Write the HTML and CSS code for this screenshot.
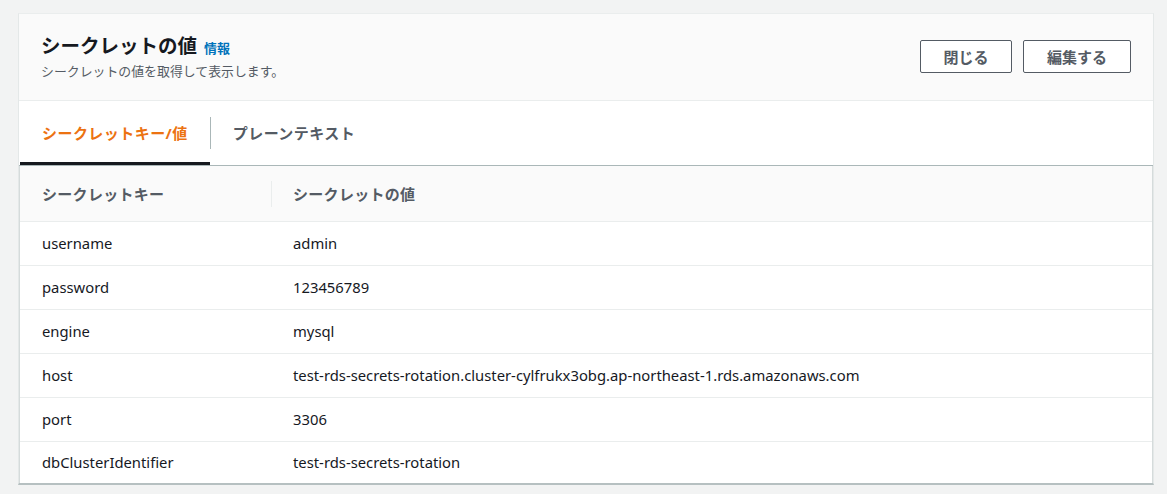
FILE: index.html
```html
<!DOCTYPE html>
<html lang="ja">
<head>
<meta charset="utf-8">
<title>シークレットの値</title>
<link rel="stylesheet" href="styles.css">
</head>
<body>
<div class="card">
  <div class="card-header">
    <div class="heading">
      <h2 class="title">シークレットの値<a class="info" href="#">情報</a></h2>
      <p class="desc">シークレットの値を取得して表示します。</p>
    </div>
    <div class="actions">
      <button class="btn btn-close">閉じる</button>
      <button class="btn btn-edit">編集する</button>
    </div>
  </div>
  <div class="tabs">
    <div class="tab active"><span class="tab-label">シークレットキー/値</span></div>
    <div class="tab-sep"></div>
    <div class="tab"><span class="tab-label">プレーンテキスト</span></div>
  </div>
  <div class="table-wrap">
    <table class="kv">
      <thead>
        <tr>
          <th class="col-key"><span>シークレットキー</span></th>
          <th class="col-val"><span class="th-sep"></span><span>シークレットの値</span></th>
        </tr>
      </thead>
      <tbody>
        <tr><td class="col-key">username</td><td class="col-val">admin</td></tr>
        <tr><td class="col-key">password</td><td class="col-val">123456789</td></tr>
        <tr><td class="col-key">engine</td><td class="col-val">mysql</td></tr>
        <tr><td class="col-key">host</td><td class="col-val">test-rds-secrets-rotation.cluster-cylfrukx3obg.ap-northeast-1.rds.amazonaws.com</td></tr>
        <tr><td class="col-key">port</td><td class="col-val">3306</td></tr>
        <tr><td class="col-key">dbClusterIdentifier</td><td class="col-val">test-rds-secrets-rotation</td></tr>
      </tbody>
    </table>
  </div>
</div>
</body>
</html>
```

FILE: styles.css
```css
* { box-sizing: border-box; }

html, body {
  margin: 0;
  background: #f2f3f3;
}

body {
  padding: 13px 13px 0 18px;
  font-family: "Noto Sans", "Noto Sans CJK JP", sans-serif;
  color: #16191f;
  font-size: 14.8px;
}

.card {
  background: #ffffff;
  border-top: 1px solid #eaeded;
  border-left: 1px solid #e4e8e8;
  border-right: 1px solid #e4e8e8;
  border-bottom: 2px solid #b6c0c1;
}

.card-header {
  display: flex;
  justify-content: space-between;
  align-items: flex-start;
  height: 87px;
  padding: 17px 22px 0 22px;
  background: #fafafa;
  border-bottom: 1px solid #eaeded;
}

.title {
  margin: 0;
  font-size: 19.5px;
  line-height: 29px;
  font-weight: 700;
  color: #16191f;
}

.info {
  font-size: 13px;
  font-weight: 700;
  color: #0073bb;
  text-decoration: none;
  margin-left: 7px;
}

.desc {
  margin: 0;
  font-size: 12.9px;
  line-height: 16px;
  color: #545b64;
}

.actions {
  display: flex;
  gap: 11px;
  margin-top: 9px;
}

.btn {
  height: 33px;
  padding: 0;
  font-family: inherit;
  font-size: 15px;
  font-weight: 700;
  color: #545b64;
  background: #ffffff;
  border: 1px solid #545b64;
  border-radius: 2px;
}

.btn-close { width: 92px; }
.btn-edit { width: 108px; }

.tabs {
  display: flex;
  align-items: center;
  height: 65px;
  border-bottom: 1px solid #aab7b8;
  padding-left: 1px;
}

.tab {
  height: 100%;
  display: flex;
  align-items: center;
  padding: 2px 22px 0 22px;
  font-size: 15px;
  letter-spacing: 0.45px;
  font-weight: 700;
  color: #545b64;
  border-bottom: 3px solid transparent;
}

.tab.active {
  color: #ec7211;
  border-bottom-color: #16191f;
}

.tab-sep {
  width: 1px;
  height: 32px;
  background: #aab7b8;
}

.table-wrap {
  border-left: 1px solid #d5dbdb;
  border-right: 1px solid #d5dbdb;
}

.kv {
  width: 100%;
  border-collapse: collapse;
}

.kv th {
  height: 55px;
  background: #fafafa;
  text-align: left;
  font-size: 15px;
  letter-spacing: 0.3px;
  font-weight: 700;
  color: #545b64;
  border-bottom: 1px solid #eaeded;
  padding: 0;
}

.kv td {
  height: 44px;
  padding: 0;
  border-bottom: 1px solid #eaeded;
  color: #16191f;
}

.kv tbody tr:last-child td {
  height: 42px;
  border-bottom: none;
}

.col-key {
  width: 251px;
  padding-left: 22px !important;
}

.kv th.col-val {
  position: relative;
  padding-left: 22px;
}

.kv td.col-val { padding-left: 22px; }

.th-sep {
  position: absolute;
  left: 0;
  top: 15px;
  width: 1px;
  height: 26px;
  background: #eaeded;
}
```
